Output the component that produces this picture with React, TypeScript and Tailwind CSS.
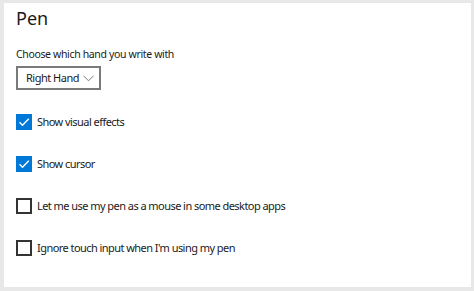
import React from 'react';

interface CheckRowProps {
  label: string;
  checked?: boolean;
}

function CheckRow({ label, checked }: CheckRowProps) {
  return (
    <div className="flex items-center h-[16px]">
      {checked ? (
        <div className="w-[16px] h-[16px] bg-[#0078d7] flex items-center justify-center">
          <svg width="12" height="12" viewBox="0 0 12 12" fill="none">
            <path d="M1.5 6.2 L4.5 9.2 L10.8 2.8" stroke="white" strokeWidth="1.4" />
          </svg>
        </div>
      ) : (
        <div className="w-[16px] h-[16px] border-2 border-[#333333] bg-white" />
      )}
      <span className="ml-[5px] text-[11px] tracking-[-0.55px] text-[#1a1a1a] whitespace-nowrap">{label}</span>
    </div>
  );
}

export default function App() {
  return (
    <div className="w-[474px] h-[291px] bg-[#e8e8e8] pt-[3px] pl-[4px] pr-[3px] pb-[4px]" style={{ fontFamily: '"Noto Sans", "Open Sans", sans-serif' }}>
      <div className="w-full h-full bg-white pl-[12px] pt-[3px]">
        <div className="text-[18px] leading-[24px] text-[#1a1a1a]">Pen</div>
        <div className="mt-[16px] text-[10.5px] leading-[16px] tracking-[-0.35px] text-[#1a1a1a]">Choose which hand you write with</div>
        <div className="mt-[4px] w-[85px] h-[24px] border-2 border-[#7a7a7a] flex items-center pl-[8px] pr-[5px]">
          <span className="text-[11px] tracking-[-0.5px] text-[#1a1a1a] flex-1 whitespace-nowrap">Right Hand</span>
          <svg width="11" height="7" viewBox="0 0 11 7" fill="none">
            <path d="M0.5 0.8 L5.5 5.8 L10.5 0.8" stroke="#777" strokeWidth="1" />
          </svg>
        </div>
        <div className="mt-[24px] flex flex-col gap-[26px]">
          <CheckRow label="Show visual effects" checked />
          <CheckRow label="Show cursor" checked />
          <CheckRow label="Let me use my pen as a mouse in some desktop apps" />
          <CheckRow label="Ignore touch input when I'm using my pen" />
        </div>
      </div>
    </div>
  );
}
